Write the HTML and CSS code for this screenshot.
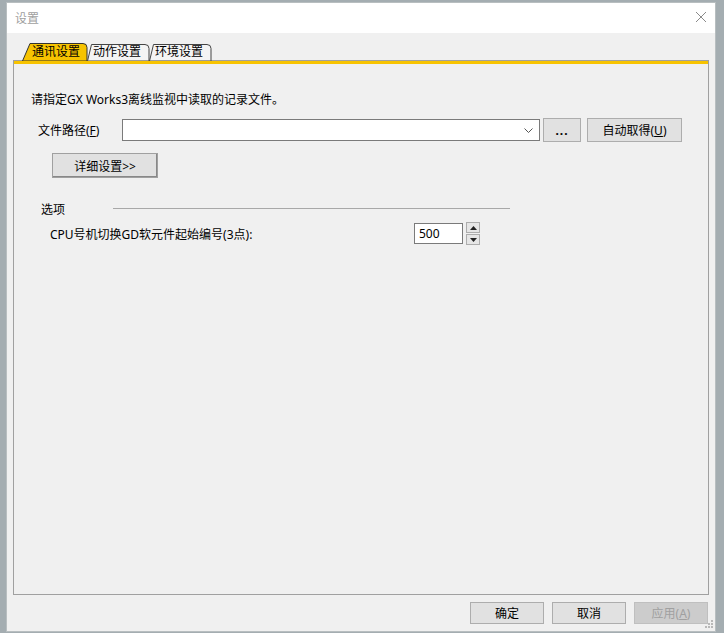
FILE: index.html
```html
<!DOCTYPE html>
<html lang="zh-CN">
<head>
    <meta charset="UTF-8">
    <title>设置</title>
    <link rel="stylesheet" href="styles.css">
</head>
<body>
    <div class="dialog">
        <!-- 标题栏 -->
        <div class="titlebar">
            <span class="title">设置</span>
            <svg class="close" width="12" height="12" viewBox="0 0 12 12">
                <path d="M1 1 L11 11 M11 1 L1 11" stroke="#8a8a8a" stroke-width="1" fill="none"/>
            </svg>
        </div>

        <!-- 选项卡 -->
        <div class="tabs">
            <div class="tab tab-active">
                <svg class="tab-shape" width="66" height="18" viewBox="0 0 66 18">
                    <path d="M0.5 18 L8 0.5 L61 0.5 Q65 0.5 65 4.5 L65 18 Z" fill="#f7c300" stroke="#333" stroke-width="1"/>
                </svg>
                <span class="tab-text">通讯设置</span>
            </div>
            <div class="tab">
                <svg class="tab-shape" width="63" height="18" viewBox="0 0 63 18">
                    <path d="M0.5 18 L4.5 1.5 L58 1.5 Q62 1.5 62 5.5 L62 18 Z" fill="#f4f4f4" stroke="#444" stroke-width="1"/>
                </svg>
                <span class="tab-text">动作设置</span>
            </div>
            <div class="tab">
                <svg class="tab-shape" width="63" height="18" viewBox="0 0 63 18">
                    <path d="M0.5 18 L4.5 1.5 L58 1.5 Q62 1.5 62 5.5 L62 18 Z" fill="#f4f4f4" stroke="#444" stroke-width="1"/>
                </svg>
                <span class="tab-text">环境设置</span>
            </div>
        </div>

        <!-- 选项卡内容 -->
        <div class="panel">
            <div class="panel-bar"></div>

            <p class="desc">请指定GX Works3离线监视中读取的记录文件。</p>

            <div class="file-row">
                <span class="file-label">文件路径(<u>F</u>)</span>
                <div class="combo">
                    <svg width="9" height="5" viewBox="0 0 9 5">
                        <path d="M0.5 0.5 L4.5 4.5 L8.5 0.5" stroke="#555" fill="none"/>
                    </svg>
                </div>
                <button class="btn btn-browse">...</button>
                <button class="btn btn-auto">自动取得(<u>U</u>)</button>
            </div>

            <button class="btn btn-detail">详细设置&gt;&gt;</button>

            <div class="group-head">
                <span class="group-label">选项</span>
                <div class="group-line"></div>
            </div>

            <div class="cpu-row">
                <span class="cpu-label">CPU号机切换GD软元件起始编号(3点):</span>
                <div class="num-input">500</div>
                <div class="spin">
                    <div class="spin-btn">
                        <svg width="7" height="4" viewBox="0 0 7 4"><path d="M0 4 L3.5 0 L7 4 Z" fill="#222"/></svg>
                    </div>
                    <div class="spin-btn">
                        <svg width="7" height="4" viewBox="0 0 7 4"><path d="M0 0 L3.5 4 L7 0 Z" fill="#222"/></svg>
                    </div>
                </div>
            </div>
        </div>

        <!-- 底部按钮 -->
        <div class="footer">
            <button class="btn btn-foot">确定</button>
            <button class="btn btn-foot">取消</button>
            <button class="btn btn-foot btn-disabled">应用(<u>A</u>)</button>
            <svg class="grip" width="8" height="8" viewBox="0 0 8 8">
                <rect x="6" y="0" width="2" height="2" fill="#b8b8b8"/>
                <rect x="3" y="3" width="2" height="2" fill="#b8b8b8"/>
                <rect x="6" y="3" width="2" height="2" fill="#b8b8b8"/>
                <rect x="0" y="6" width="2" height="2" fill="#b8b8b8"/>
                <rect x="3" y="6" width="2" height="2" fill="#b8b8b8"/>
                <rect x="6" y="6" width="2" height="2" fill="#b8b8b8"/>
            </svg>
        </div>
    </div>
</body>
</html>
```

FILE: styles.css
```css
* {
    margin: 0;
    padding: 0;
    box-sizing: border-box;
}

body {
    font-family: "Noto Sans", "Noto Sans CJK SC", sans-serif;
    font-size: 12px;
    color: #000;
    background: #a4adb1;
    width: 724px;
    height: 633px;
    overflow: hidden;
}

.dialog {
    margin: 3px 0 0 7px;
    width: 708px;
    height: 628px;
    background: #f0f0f0;
    display: flex;
    flex-direction: column;
    box-shadow: 0 0 0 1px #b8bec0;
}

/* 标题栏 */
.titlebar {
    height: 30px;
    background: #fff;
    display: flex;
    align-items: center;
    justify-content: space-between;
    padding: 0 8px 0 8px;
}

.title {
    color: #a0a0a0;
    font-size: 12px;
}

.close {
    margin-top: -2px;
}

/* 选项卡 */
.tabs {
    display: flex;
    margin: 10px 0 0 15px;
    height: 18px;
    position: relative;
    z-index: 1;
}

.tab {
    position: relative;
    width: 63px;
    height: 18px;
    margin-right: -1px;
}

.tab-active {
    width: 66px;
}

.tab-shape {
    position: absolute;
    left: 0;
    top: 0;
}

.tab-text {
    position: relative;
    display: block;
    line-height: 18px;
    padding-left: 6px;
    font-size: 12px;
}

.tab-active .tab-text {
    padding-left: 10px;
}

/* 内容面板 */
.panel {
    margin: -1px 6px 0 6px;
    height: 535px;
    border: 1px solid #a0a0a0;
}

.panel-bar {
    height: 3px;
    background: #f7c300;
}

.desc {
    margin: 29px 0 0 17px;
    line-height: 14px;
}

.file-row {
    display: flex;
    align-items: center;
    margin: 11px 0 0 24px;
    height: 24px;
}

.file-label {
    width: 84px;
}

.combo {
    width: 418px;
    height: 22px;
    background: #fff;
    border: 1px solid #7a7a7a;
    display: flex;
    align-items: center;
    justify-content: flex-end;
    padding-right: 6px;
    margin-right: 3px;
}

.btn {
    font-family: inherit;
    font-size: 12px;
    background: #e1e1e1;
    border: 1px solid #adadad;
    color: #000;
}

.btn-browse {
    width: 38px;
    height: 24px;
    margin-right: 6px;
    font-weight: bold;
    letter-spacing: 1px;
}

.btn-auto {
    width: 95px;
    height: 24px;
}

.btn-detail {
    display: block;
    margin: 11px 0 0 38px;
    width: 106px;
    height: 25px;
    border-color: #a0a0a0;
    box-shadow: inset -1px -1px 0 #888;
}

.group-head {
    display: flex;
    align-items: center;
    margin: 24px 0 0 27px;
    height: 14px;
}

.group-label {
    width: 72px;
}

.group-line {
    width: 397px;
    height: 1px;
    background: #a8a8a8;
    margin-top: -2px;
}

.cpu-row {
    display: flex;
    align-items: center;
    margin: 6px 0 0 36px;
    height: 23px;
}

.cpu-label {
    width: 364px;
}

.num-input {
    width: 49px;
    height: 21px;
    background: #fff;
    border: 1px solid #7a7a7a;
    line-height: 19px;
    padding-left: 4px;
}

.spin {
    margin-left: 3px;
    display: flex;
    flex-direction: column;
    gap: 1px;
}

.spin-btn {
    width: 14px;
    height: 11px;
    background: #e6e6e6;
    border: 1px solid #adadad;
    display: flex;
    align-items: center;
    justify-content: center;
}

/* 底部按钮 */
.footer {
    display: flex;
    justify-content: flex-end;
    gap: 8px;
    padding: 7px 7px 0 0;
    position: relative;
}

.btn-foot {
    width: 74px;
    height: 22px;
}

.btn-disabled {
    background: #cccccc;
    border-color: #bfbfbf;
    color: #a0a0a0;
}

.grip {
    position: absolute;
    right: 2px;
    top: 25px;
}
```
